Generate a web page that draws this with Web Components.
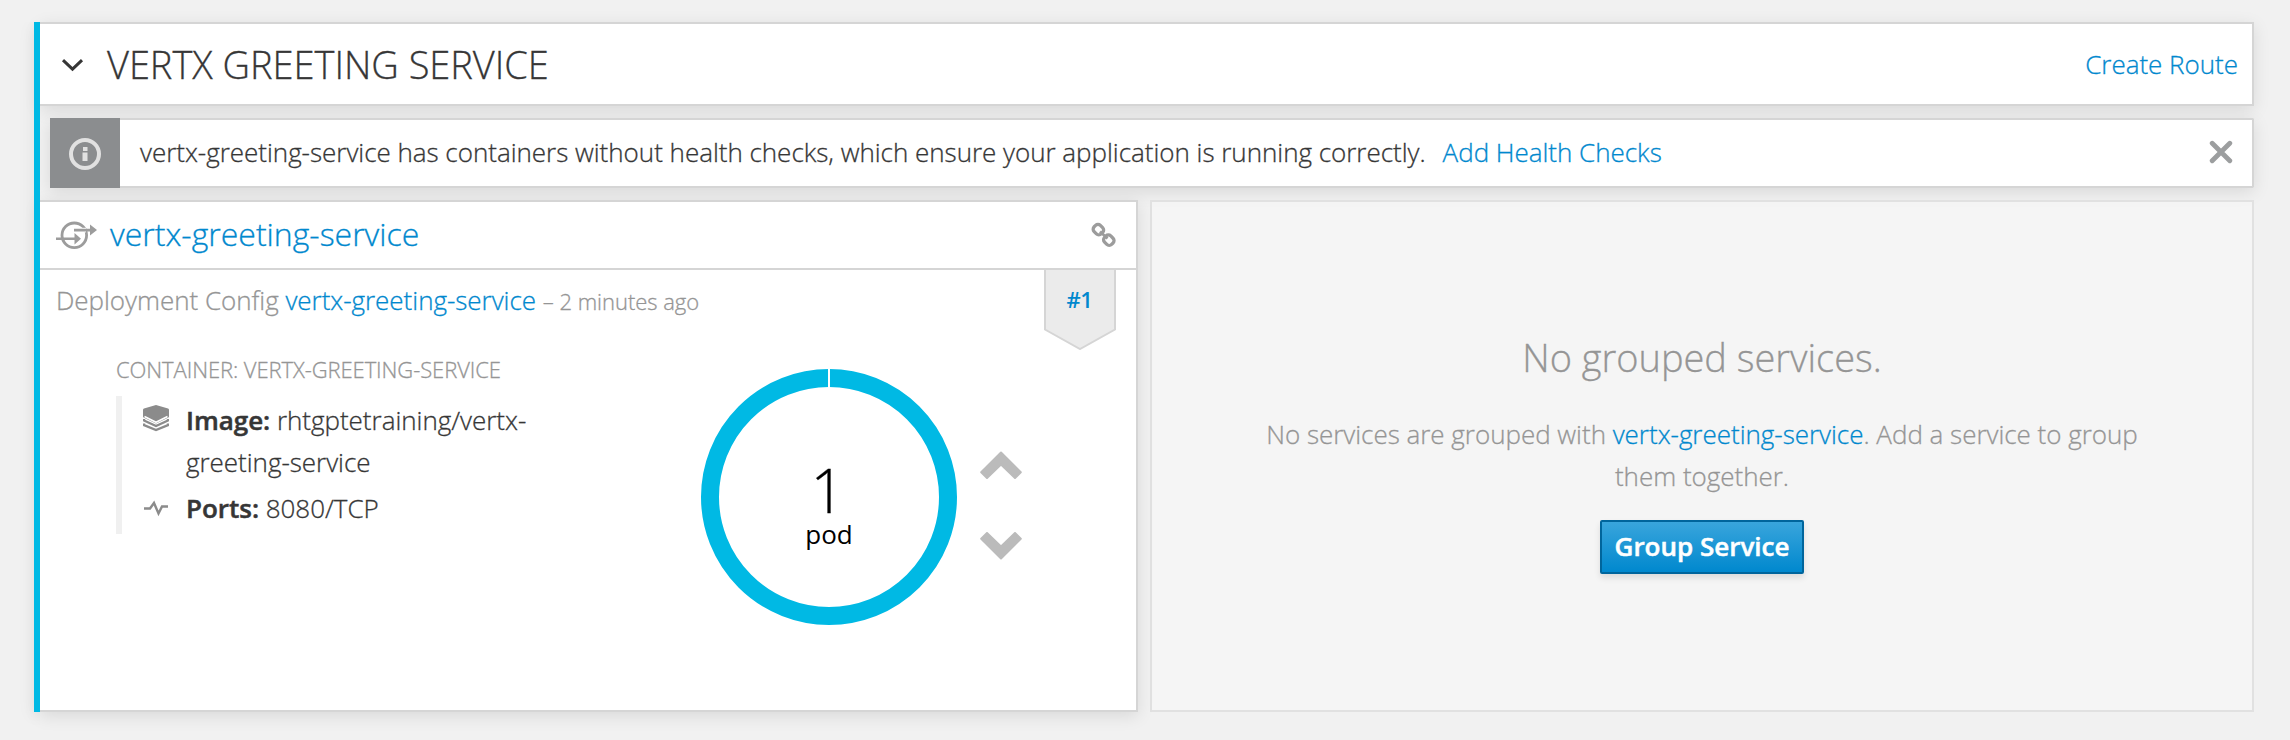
<!DOCTYPE html>
<html lang="en">
<head>
<meta charset="utf-8">
<title>Vertx Greeting Service</title>
<style>
html,body{margin:0;height:100%}
body{background:#f1f1f1;font:300 26px/42px "Open Sans",sans-serif;color:#363636;overflow:hidden;letter-spacing:-.025px;
-webkit-text-stroke:.3px currentcolor;
--link:#0088ce;--accent:#00b9e4;--line:#d5d5d5;--muted:#959595;--shadow:0 4px 16px rgba(0,0,0,.1)}
</style>
</head>
<body>
<service-group>
  <group-header heading="VERTX GREETING SERVICE"><text-link>Create Route</text-link></group-header>
  <info-alert>vertx-greeting-service has containers without health checks, which ensure your application is running correctly.<text-link slot="action">Add Health Checks</text-link></info-alert>
  <service-row>
    <service-card heading="vertx-greeting-service">
      <deployment-line slot="sub" age="– 2 minutes ago">Deployment Config <text-link>vertx-greeting-service</text-link></deployment-line>
      <revision-badge slot="badge">#1</revision-badge>
      <container-info label="CONTAINER: VERTX-GREETING-SERVICE"></container-info>
      <pod-donut count="1" unit="pod"></pod-donut>
      <scale-buttons></scale-buttons>
    </service-card>
    <empty-panel heading="No grouped services.">No services are grouped with <text-link>vertx-greeting-service</text-link>. Add a service to group them together.<primary-button slot="button">Group Service</primary-button></empty-panel>
  </service-row>
</service-group>
<script>
const define=(name,render)=>customElements.define(name,class extends HTMLElement{
  connectedCallback(){
    if(this.shadowRoot)return;
    this.attachShadow({mode:'open'}).innerHTML=render(this);
  }
});
define('text-link',()=>`<style>:host{display:inline}a{color:var(--link);text-decoration:none}</style><a><slot></slot></a>`);
define('service-group',()=>`<style>
:host{display:flex;padding:22px 36px 0 34px}
.bar{flex:none;width:6px;background:var(--accent);box-shadow:var(--shadow);position:relative;z-index:1;clip-path:inset(0 0 -24px -24px)}
.col{flex:1;display:flex;flex-direction:column;gap:12px;min-width:0}
</style><div class="bar"></div><div class="col"><slot></slot></div>`);
define('group-header',e=>`<style>
:host{box-sizing:border-box;display:flex;align-items:center;height:84px;background:#fff;border:2px solid var(--line);border-left:0;box-shadow:var(--shadow);padding:0 14px 1px 21px}
svg{flex:none;margin-top:3px}
h2{margin:0;font-weight:300;font-size:38px;line-height:42px;flex:1;padding-left:23px}
</style><svg width="23" height="14" viewBox="0 0 23 14"><path d="M2 2.200l9.500 9 9.500-9" fill="none" stroke="#363636" stroke-width="3"/></svg><h2>${e.getAttribute('heading')}</h2><slot></slot>`);
define('info-alert',()=>`<style>
:host{box-sizing:border-box;display:flex;align-items:stretch;height:70px;margin-left:10px;box-shadow:var(--shadow)}
.ico{width:70px;background:#8b8d8f;display:flex;align-items:center;justify-content:center;padding-top:2px;box-sizing:border-box}
.box{flex:1;display:flex;align-items:center;background:#fff;border:2px solid var(--line);border-left:0;border-radius:0 2px 2px 0;padding:0 19px 2px 20px}
.msg{flex:1}.act{margin-left:17px}
</style><div class="ico"><svg width="32" height="32" viewBox="0 0 32 32"><circle cx="16" cy="16" r="14" fill="none" stroke="#e1e1e1" stroke-width="4"/><path d="M14 9h4.500v4H14zM13.500 14.500h5V23h-5z" fill="#e1e1e1"/></svg></div>
<div class="box"><div class="msg"><slot></slot><span class="act"><slot name="action"></slot></span></div>
<svg width="24" height="24" viewBox="0 0 24 24"><path d="M3.200 3.200l17.600 17.600M20.800 3.200L3.200 20.800" stroke="#9c9e9f" stroke-width="4.800" stroke-linecap="round"/></svg></div>`);
define('service-row',()=>`<style>:host{display:grid;grid-template-columns:1098px 1fr;gap:12px;height:512px}</style><slot></slot>`);
define('service-card',e=>`<style>
:host{box-sizing:border-box;display:flex;flex-direction:column;background:#fff;border:2px solid var(--line);border-left:0;box-shadow:var(--shadow);position:relative}
header{display:flex;align-items:center;height:66px;border-bottom:2px solid var(--line);padding:0 19px 0 16px}
h3{margin:0;flex:1;font-weight:300;font-size:32px;line-height:42px;padding:0 0 3px 12px;letter-spacing:0}
.sub{padding:9px 16px 0}
.body{display:flex;padding:29px 0 0 76px}
.badge{position:absolute;right:20px;top:68px}
svg{flex:none}
</style><header>
<svg width="42" height="30" viewBox="0 0 42 30"><g fill="none" stroke="#9c9c9c"><circle cx="18.300" cy="15.300" r="12.300" stroke-width="2.800"/><path d="M19 10.100h11" stroke="#fff" stroke-width="4.600"/><path d="M18 10.100h17M0 18.800h20" stroke-width="2.600"/></g><path d="M34 4.600l7 5.500-7 5.500zM18.500 13l6.500 5.800-6.500 5.800z" fill="#9c9c9c"/></svg>
<h3><text-link>${e.getAttribute('heading')}</text-link></h3>
<svg width="26" height="26" viewBox="0 0 26 26"><g fill="none" stroke="#9c9c9c" stroke-width="3.300"><rect x="3" y="2.600" width="8.800" height="10" rx="3.400" transform="rotate(-45 7.400 7.600)"/><rect x="13.400" y="13.200" width="8.800" height="10" rx="3.400" transform="rotate(-45 17.800 18.200)"/><path d="M9 9.500l7.500 7" stroke-width="2.800"/></g></svg>
</header><div class="sub"><slot name="sub"></slot></div><div class="body"><slot></slot></div><div class="badge"><slot name="badge"></slot></div>`);
define('deployment-line',e=>`<style>:host{display:block;color:var(--muted);letter-spacing:-.03px}small{font-size:22px}</style><slot></slot> <small>${e.getAttribute('age')}</small>`);
define('revision-badge',()=>`<style>
:host{display:grid;width:72px;height:80px}
svg,span{grid-area:1/1}
span{text-align:center;font-size:22px;font-weight:600;line-height:59px;padding-right:1px;letter-spacing:-.3px;color:var(--link);-webkit-text-stroke:0}
</style><svg width="72" height="80" viewBox="0 0 72 80"><path d="M1-2V59.500L36 79 71 59.500V-2" fill="#ebebeb" stroke="#d5d5d5" stroke-width="2"/></svg><span><slot></slot></span>`);
define('container-info',e=>`<style>
:host{display:block;width:440px}
.label{color:var(--muted);font-size:22px;line-height:36px;margin-bottom:9px;letter-spacing:-.08px}
dl{margin:0;border-left:6px solid #f0f0f0;padding:3px 0 5px 21px;display:flex;flex-direction:column;gap:4px}
.r{display:flex}svg{flex:none;width:26px;height:42px;margin-right:17px}
b{font-weight:600;-webkit-text-stroke:.5px}
</style><div class="label">${e.getAttribute('label')}</div><dl>
<div class="r"><svg viewBox="0 0 26 42"><g fill="#8b8b8b"><path d="M0 10.500Q0 10 1 9.600L13 6l12 3.600q1 .4 1 .9v7q0 .8-1 1.300L13 24.500 1 18.800Q0 18.300 0 17.500z"/></g><path d="M1 20v1.500L13 27l12-5.500V20M1 24.500V26l12 5 12-5v-1.500" fill="none" stroke="#8b8b8b" stroke-width="2.400"/><path d="M1.500 17.500L13 23.300l11.500-5.800" fill="none" stroke="#fff" stroke-width="1.600"/></svg><div><b>Image:</b> rhtgptetraining/vertx-greeting-service</div></div>
<div class="r"><svg viewBox="0 0 26 42"><path d="M1 21.500h6l4-5.500 4.500 10.500 3.500-7h6" fill="none" stroke="#8b8b8b" stroke-width="2.400"/></svg><div><b>Ports:</b> 8080/TCP</div></div></dl>`);
define('pod-donut',e=>`<style>
:host{display:grid;width:256px;height:256px;margin:18px 0 0 145px;color:#000}
svg,.t{grid-area:1/1}
.t{display:flex;flex-direction:column;align-items:center;padding-top:92px}
.n{font-size:60px;line-height:58px;margin-left:-3px}.u{font-size:26px;font-weight:400;line-height:30px;-webkit-text-stroke:0}
</style><svg viewBox="0 0 256 256"><circle cx="128" cy="128" r="119" fill="none" stroke="#00b9e4" stroke-width="18"/><path d="M128 0v20" stroke="#fff" stroke-width="2"/></svg><div class="t"><div class="n">${e.getAttribute('count')}</div><div class="u">${e.getAttribute('unit')}</div></div>`);
define('scale-buttons',()=>`<style>:host{display:flex;flex-direction:column;gap:53px;margin:100px 0 0 22px}svg{display:block}</style>
<svg width="44" height="28" viewBox="0 0 44 28"><path d="M22 1.500L41.800 21.300 36 27 22 13.500 8 27 2.200 21.300z" fill="#bbb" stroke="#bbb" stroke-width="2" stroke-linejoin="round"/></svg>
<svg width="44" height="28" viewBox="0 0 44 28"><path d="M22 26.500L41.800 6.700 36 1 22 14.500 8 1 2.200 6.700z" fill="#bbb" stroke="#bbb" stroke-width="2" stroke-linejoin="round"/></svg>`);
define('empty-panel',e=>`<style>
:host{box-sizing:border-box;display:flex;flex-direction:column;align-items:center;background:rgba(255,255,255,.3);border:2px solid #e1e1e1;color:var(--muted);text-align:center;padding:134px 108px 0}
h3{margin:0 0 35px;font-weight:300;font-size:38px;line-height:42px}
p{margin:0 0 23px}
</style><h3>${e.getAttribute('heading')}</h3><p><slot></slot></p><slot name="button"></slot>`);
define('primary-button',()=>`<style>
:host{display:block}
button{display:block;box-sizing:border-box;width:204px;height:54px;padding:0 0 2px;border:2px solid #00659c;border-radius:2px;background:linear-gradient(#39a5dc,#0088ce);box-shadow:0 4px 6px rgba(3,3,3,.1);color:#fff;font:600 26px/46px "Open Sans",sans-serif;white-space:nowrap;-webkit-text-stroke:.5px #fff}
</style><button><slot></slot></button>`);
</script>
</body>
</html>
